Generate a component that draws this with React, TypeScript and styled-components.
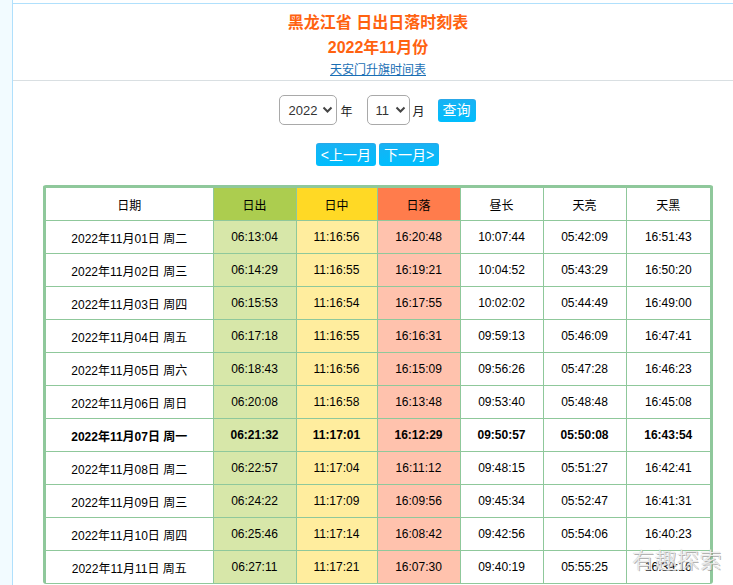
import React from 'react';
import styled, { createGlobalStyle } from 'styled-components';

const GlobalStyle = createGlobalStyle`
  html, body {
    margin: 0;
    padding: 0;
    height: 585px;
    overflow: hidden;
    background: #fff;
  }
  body {
    font-family: "Liberation Sans", "Noto Sans CJK SC", sans-serif;
    font-size: 12px;
    color: #000;
  }
`;

const Page = styled.div`
  position: relative;
  display: flex;
  height: 585px;
  overflow: hidden;
`;

const Sidebar = styled.div`
  width: 12px;
  flex: none;
  background: #f2fbff;
  border-right: 1px solid #b0e0fc;
`;

const Main = styled.main`
  flex: 1;
  min-width: 0;
  padding-top: 3px;
`;

const Header = styled.header`
  border-top: 1px solid #b0e0fc;
  border-bottom: 1px solid #d9dfe2;
  height: 76px;
  text-align: center;
  padding-left: 10px;
`;

const Title = styled.h1`
  margin: 0;
  padding-top: 8px;
  font-size: 16px;
  line-height: 22px;
  font-weight: bold;
  color: #ff6210;
`;

const SubTitle = styled.h2`
  margin: 3px 0 0;
  font-size: 16px;
  line-height: 22px;
  font-weight: bold;
  color: #ff6210;
`;

const HeaderLink = styled.a`
  display: block;
  margin-top: 3px;
  font-size: 12px;
  line-height: 16px;
  color: #1a6fb5;
  text-decoration: underline;
`;

const QueryRow = styled.form`
  display: flex;
  align-items: center;
  justify-content: center;
  height: 30px;
  margin: 14px 0 0;
  padding-left: 9px;
`;

const SelectBox = styled.div<{ $w: number }>`
  display: flex;
  align-items: center;
  justify-content: space-between;
  box-sizing: border-box;
  width: ${(p) => p.$w}px;
  height: 30px;
  padding: 0 3px 0 8px;
  border: 1px solid #a9a9a9;
  border-radius: 5px;
  font-size: 13px;
  color: #333;
  background: #fff;
`;

const Unit = styled.span<{ $gap: number }>`
  margin: 0 ${(p) => p.$gap}px 0 3px;
  font-size: 12px;
  color: #222;
`;

const BlueButton = styled.button`
  height: 23px;
  padding: 0 5px;
  border: 0;
  border-top: 1px solid #2aa8e8;
  border-radius: 3px;
  background: linear-gradient(#19b2f3, #00bdfd);
  color: #fff;
  font-family: inherit;
  font-size: 14px;
  line-height: 21px;
  white-space: nowrap;
`;

const Pager = styled.div`
  display: flex;
  justify-content: center;
  gap: 3px;
  margin-top: 18px;
  padding-left: 9px;
`;

const TableWrap = styled.div`
  width: 670px;
  margin: 19px 0 0 30px;
  box-sizing: border-box;
  border: 3px solid #8fc89b;
  border-radius: 3px;
  border-bottom: 0;
`;

const Table = styled.table`
  width: 664px;
  table-layout: fixed;
  border-collapse: collapse;
  border-spacing: 0;
`;

const Th = styled.th<{ $bg?: string }>`
  height: 32px;
  padding: 0;
  font-weight: normal;
  font-size: 12px;
  text-align: center;
  background: ${(p) => p.$bg || '#fff'};
  border: 1px solid #8fc89b;
  border-top: 0;
  &:first-child { border-left: 0; }
  &:last-child { border-right: 0; }
`;

const Td = styled.td<{ $bg?: string; $today?: boolean }>`
  height: 32px;
  padding: 0;
  font-size: 12px;
  font-weight: ${(p) => (p.$today ? 'bold' : 'normal')};
  text-align: center;
  background: ${(p) => p.$bg || '#fff'};
  border: 1px solid #8fc89b;
  &:first-child { border-left: 0; }
  &:last-child { border-right: 0; }
`;

const Watermark = styled.div`
  position: absolute;
  left: 632px;
  top: 548px;
  font-size: 22px;
  line-height: 26px;
  letter-spacing: 0.5px;
  font-weight: 300;
  color: rgba(248, 248, 248, 0.85);
  text-shadow: 0 0 1px #aaa, 1px 1px 0 rgba(130, 130, 130, 0.6);
  white-space: nowrap;
`;

const Chevron = () => (
  <svg width="11" height="8" viewBox="0 0 11 8">
    <path d="M1.5 1.5 L5.5 5.5 L9.5 1.5" fill="none" stroke="#444" strokeWidth="2" />
  </svg>
);

const columns = [
  { label: '日出', head: '#accd4f', cell: '#d7e7a9' },
  { label: '日中', head: '#ffd925', cell: '#ffed9e' },
  { label: '日落', head: '#ff7c4c', cell: '#ffc2ad' },
  { label: '昼长' },
  { label: '天亮' },
  { label: '天黑' },
];

const widths = [167, 83, 81, 83, 83, 83, 84];

const rows: string[][] = [
  ['2022年11月01日 周二', '06:13:04', '11:16:56', '16:20:48', '10:07:44', '05:42:09', '16:51:43'],
  ['2022年11月02日 周三', '06:14:29', '11:16:55', '16:19:21', '10:04:52', '05:43:29', '16:50:20'],
  ['2022年11月03日 周四', '06:15:53', '11:16:54', '16:17:55', '10:02:02', '05:44:49', '16:49:00'],
  ['2022年11月04日 周五', '06:17:18', '11:16:55', '16:16:31', '09:59:13', '05:46:09', '16:47:41'],
  ['2022年11月05日 周六', '06:18:43', '11:16:56', '16:15:09', '09:56:26', '05:47:28', '16:46:23'],
  ['2022年11月06日 周日', '06:20:08', '11:16:58', '16:13:48', '09:53:40', '05:48:48', '16:45:08'],
  ['2022年11月07日 周一', '06:21:32', '11:17:01', '16:12:29', '09:50:57', '05:50:08', '16:43:54'],
  ['2022年11月08日 周二', '06:22:57', '11:17:04', '16:11:12', '09:48:15', '05:51:27', '16:42:41'],
  ['2022年11月09日 周三', '06:24:22', '11:17:09', '16:09:56', '09:45:34', '05:52:47', '16:41:31'],
  ['2022年11月10日 周四', '06:25:46', '11:17:14', '16:08:42', '09:42:56', '05:54:06', '16:40:23'],
  ['2022年11月11日 周五', '06:27:11', '11:17:21', '16:07:30', '09:40:19', '05:55:25', '16:39:16'],
];

const App: React.FC = () => {
  return (
    <Page>
      <GlobalStyle />
      <Sidebar />
      <Main>
        <Header>
          <Title>黑龙江省 日出日落时刻表</Title>
          <SubTitle>2022年11月份</SubTitle>
          <HeaderLink href="#">天安门升旗时间表</HeaderLink>
        </Header>
        <QueryRow>
          <SelectBox $w={58}>
            2022 <Chevron />
          </SelectBox>
          <Unit $gap={14}>年</Unit>
          <SelectBox $w={43}>
            11 <Chevron />
          </SelectBox>
          <Unit $gap={13}>月</Unit>
          <BlueButton type="button">查询</BlueButton>
        </QueryRow>
        <Pager>
          <BlueButton type="button">&lt;上一月</BlueButton>
          <BlueButton type="button">下一月&gt;</BlueButton>
        </Pager>
        <TableWrap>
          <Table>
            <colgroup>
              {widths.map((w, i) => (
                <col key={i} style={{ width: w }} />
              ))}
            </colgroup>
            <thead>
              <tr>
                <Th>日期</Th>
                {columns.map((c) => (
                  <Th key={c.label} $bg={c.head}>
                    {c.label}
                  </Th>
                ))}
              </tr>
            </thead>
            <tbody>
              {rows.map((row, r) => (
                <tr key={row[0]}>
                  {row.map((v, i) => (
                    <Td key={i} $today={r === 6} $bg={i > 0 ? columns[i - 1].cell : undefined}>
                      {v}
                    </Td>
                  ))}
                </tr>
              ))}
            </tbody>
          </Table>
        </TableWrap>
      </Main>
      <Watermark>有趣探索</Watermark>
    </Page>
  );
};

export default App;
